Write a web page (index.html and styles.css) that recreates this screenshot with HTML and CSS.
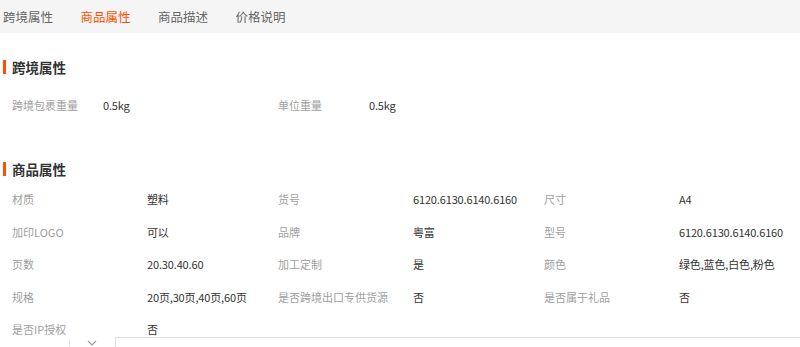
FILE: index.html
```html
<!DOCTYPE html>
<html lang="zh-CN">
<head>
  <meta charset="UTF-8" />
  <meta name="viewport" content="width=device-width, initial-scale=1.0" />
  <title>商品属性</title>
  <link rel="stylesheet" href="styles.css">
</head>
<body>
  <!-- 顶部标签栏 -->
  <div class="tabs">
    <span class="tab">跨境属性</span>
    <span class="tab active">商品属性</span>
    <span class="tab">商品描述</span>
    <span class="tab">价格说明</span>
  </div>

  <!-- 跨境属性 -->
  <div class="section section-cross">
    <h3 class="section-title">跨境属性</h3>
    <div class="attr-row">
      <span class="attr-label">跨境包裹重量</span>
      <span class="attr-value">0.5kg</span>
      <span class="attr-label">单位重量</span>
      <span class="attr-value">0.5kg</span>
    </div>
  </div>

  <!-- 商品属性 -->
  <div class="section section-goods">
    <h3 class="section-title">商品属性</h3>
    <div class="attr-row">
      <span class="attr-label">材质</span>
      <span class="attr-value">塑料</span>
      <span class="attr-label">货号</span>
      <span class="attr-value">6120.6130.6140.6160</span>
      <span class="attr-label">尺寸</span>
      <span class="attr-value">A4</span>
    </div>
    <div class="attr-row">
      <span class="attr-label">加印LOGO</span>
      <span class="attr-value">可以</span>
      <span class="attr-label">品牌</span>
      <span class="attr-value">粤富</span>
      <span class="attr-label">型号</span>
      <span class="attr-value">6120.6130.6140.6160</span>
    </div>
    <div class="attr-row">
      <span class="attr-label">页数</span>
      <span class="attr-value">20.30.40.60</span>
      <span class="attr-label">加工定制</span>
      <span class="attr-value">是</span>
      <span class="attr-label">颜色</span>
      <span class="attr-value">绿色,蓝色,白色,粉色</span>
    </div>
    <div class="attr-row">
      <span class="attr-label">规格</span>
      <span class="attr-value">20页,30页,40页,60页</span>
      <span class="attr-label">是否跨境出口专供货源</span>
      <span class="attr-value">否</span>
      <span class="attr-label">是否属于礼品</span>
      <span class="attr-value">否</span>
    </div>
    <div class="attr-row">
      <span class="attr-label">是否IP授权</span>
      <span class="attr-value">否</span>
    </div>
  </div>

  <!-- 底部浮动条 -->
  <div class="bottom-bar">
    <div class="bottom-select"></div>
    <span class="bottom-arrow">
      <svg width="10" height="6" viewBox="0 0 10 6"><path d="M1 1 L5 5 L9 1" fill="none" stroke="#999" stroke-width="1.1"/></svg>
    </span>
    <div class="bottom-input"></div>
  </div>
</body>
</html>
```

FILE: styles.css
```css
/* 基础 */
* {
  box-sizing: border-box;
}
body {
  margin: 0;
  background-color: #ffffff;
  font-family: "Noto Sans CJK SC", "Noto Sans", sans-serif;
  color: #333333;
  overflow: hidden;
}

/* 标签栏 */
.tabs {
  height: 33px;
  background-color: #f5f5f5;
  display: flex;
  align-items: center;
  gap: 27.5px;
  padding-left: 3px;
}
.tab {
  font-size: 12.5px;
  line-height: 16px;
  color: #666666;
}
.tab.active {
  color: #ff5000;
}

/* 分区 */
.section-cross {
  margin-top: 24px;
}
.section-goods {
  margin-top: 38px;
}
.section-title {
  margin: 0;
  height: 20px;
  line-height: 20px;
  font-size: 13.5px;
  font-weight: 700;
  color: #333333;
  display: flex;
  align-items: center;
  padding-left: 3px;
}
.section-title::before {
  content: "";
  width: 3px;
  height: 14px;
  background-color: #ff5000;
  margin-right: 6px;
}

/* 属性行 */
.attr-row {
  display: flex;
  padding-left: 12px;
  height: 32.5px;
  align-items: center;
  font-size: 11px;
  line-height: 14px;
}
.section-cross .attr-row {
  margin-top: 11px;
  height: 33px;
}
.section-goods .attr-row:first-of-type {
  margin-top: 4px;
}
.attr-label {
  color: #a0a0a0;
  width: 135px;
  flex-shrink: 0;
}
.attr-value {
  color: #333333;
  width: 131px;
  flex-shrink: 0;
  white-space: nowrap;
  letter-spacing: -0.15px;
}
.section-cross .attr-label {
  width: 91px;
}
.section-cross .attr-value {
  width: 175px;
}

/* 底部浮动条 */
.bottom-bar {
  position: fixed;
  left: 0;
  right: 0;
  bottom: 0;
  height: 10px;
  display: flex;
  align-items: flex-start;
}
.bottom-select {
  width: 70px;
  height: 10px;
  margin-top: 2px;
  border-right: 1px solid #e5e5e5;
}
.bottom-arrow {
  width: 45px;
  display: flex;
  justify-content: center;
  padding-top: 3px;
  padding-right: 2px;
}
.bottom-input {
  flex: 1;
  height: 10px;
  border-top: 1px solid #e0e0e0;
  border-left: 1px solid #e0e0e0;
  background-color: #ffffff;
}
```
